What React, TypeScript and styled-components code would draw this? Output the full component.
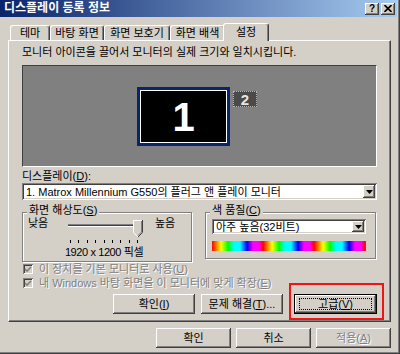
import React from "react";
import styled, { createGlobalStyle, css } from "styled-components";

const GlobalStyle = createGlobalStyle`
  html, body {
    margin: 0;
    padding: 0;
    background: #d4d0c8;
  }
  body {
    font-family: "Liberation Sans", "Noto Sans CJK KR", sans-serif;
    font-size: 11px;
    color: #000;
  }
  * {
    box-sizing: border-box;
  }
`;

const raised = css`
  box-shadow: inset -1px -1px #404040, inset 1px 1px #fff, inset -2px -2px #808080,
    inset 2px 2px #d4d0c8;
`;

const sunken = css`
  box-shadow: inset 1px 1px #808080, inset -1px -1px #fff, inset 2px 2px #404040,
    inset -2px -2px #d4d0c8;
`;

const Window = styled.div`
  width: 400px;
  height: 354px;
  background: #d4d0c8;
  display: flex;
  flex-direction: column;
  box-shadow: inset -1px -1px #404040, inset -2px -2px #808080;
  overflow: hidden;
`;

const TitleBar = styled.div`
  height: 17px;
  margin-right: 3px;
  padding: 0 2px 0 4px;
  background: linear-gradient(to right, #0a246a, #a6caf0);
  display: flex;
  align-items: center;
  justify-content: space-between;
`;

const Title = styled.span`
  color: #fff;
  font-weight: bold;
  font-size: 12px;
  line-height: 17px;
  white-space: nowrap;
`;

const CaptionButtons = styled.div`
  display: flex;
  gap: 2px;
`;

const CaptionButton = styled.div`
  width: 14px;
  height: 12px;
  background: #d4d0c8;
  ${raised}
  display: flex;
  align-items: center;
  justify-content: center;
  font-family: "Liberation Sans", sans-serif;
  font-weight: bold;
  font-size: 10px;
  line-height: 10px;
`;

const Body = styled.div`
  flex: 1;
  display: flex;
  flex-direction: column;
  padding: 6px 9px 0 8px;
`;

const TabStrip = styled.div`
  display: flex;
  align-items: flex-end;
  height: 17px;
  padding-left: 2px;
  position: relative;
  z-index: 1;
`;

const Tab = styled.div<{ $w: number; $active?: boolean }>`
  width: ${(p) => p.$w}px;
  height: 15px;
  background: #d4d0c8;
  border: 1px solid;
  border-color: #fff #404040 transparent #fff;
  border-bottom: 0;
  border-radius: 3px 3px 0 0;
  box-shadow: inset -1px 0 #808080;
  display: flex;
  align-items: center;
  justify-content: center;
  line-height: 12px;
  white-space: nowrap;
  ${(p) =>
    p.$active &&
    css`
      width: ${p.$w + 4}px;
      height: 18px;
      margin: 0 -2px -1px -2px;
      position: relative;
      z-index: 2;
      padding-bottom: 2px;
    `}
`;

const Panel = styled.div`
  height: 282px;
  border: 1px solid;
  border-color: #fff #404040 #404040 #fff;
  box-shadow: inset -1px -1px #808080;
  padding: 5px 13px 0 13px;
  display: flex;
  flex-direction: column;
`;

const Line = styled.div<{ $mt?: number }>`
  line-height: 12px;
  white-space: nowrap;
  margin-top: ${(p) => p.$mt ?? 0}px;
`;

const MonitorCanvas = styled.div`
  position: relative;
  height: 102px;
  margin-top: 7px;
  background: #808080;
  border: 1px solid;
  border-color: #404040 #fff #fff #404040;
`;

const Monitor = styled.div<{ $x: number; $y: number; $w: number; $h: number }>`
  position: absolute;
  left: ${(p) => p.$x}px;
  top: ${(p) => p.$y}px;
  width: ${(p) => p.$w}px;
  height: ${(p) => p.$h}px;
  display: flex;
  align-items: center;
  justify-content: center;
  font-family: "Liberation Sans", sans-serif;
  font-weight: bold;
`;

const PrimaryMonitor = styled(Monitor)`
  background: #000;
  border: 3px solid #0a246a;
  box-shadow: inset 0 0 0 1px #fff;
  color: #fff;
  font-size: 40px;
  line-height: 1;
`;

const SecondaryMonitor = styled(Monitor)`
  background: #4a4a4a;
  border: 1px dotted #b8b8b8;
  color: #e6e6e6;
  font-size: 15px;
  line-height: 1;
`;

const Combo = styled.div<{ $h: number; $mt?: number }>`
  height: ${(p) => p.$h}px;
  margin-top: ${(p) => p.$mt ?? 0}px;
  background: #fff;
  ${sunken}
  display: flex;
  align-items: stretch;
  padding: 2px 2px 2px 4px;
`;

const ComboText = styled.span`
  flex: 1;
  align-self: center;
  line-height: 12px;
  white-space: nowrap;
  overflow: hidden;
`;

const ComboArrow = styled.div`
  width: 12px;
  background: #d4d0c8;
  ${raised}
  display: flex;
  align-items: center;
  justify-content: center;
`;

const GroupRow = styled.div`
  display: flex;
  align-items: flex-start;
  gap: 13px;
  margin-top: 12px;
`;

const GroupBox = styled.div<{ $w: number; $h: number }>`
  position: relative;
  width: ${(p) => p.$w}px;
  height: ${(p) => p.$h}px;
  border: 1px solid #808080;
  box-shadow: inset 1px 1px #fff, 1px 1px #fff;
`;

const GroupLabel = styled.span`
  position: absolute;
  top: -9px;
  left: 4px;
  padding: 0 2px;
  background: #d4d0c8;
  line-height: 12px;
  white-space: nowrap;
`;

const ResolutionBody = styled.div`
  display: flex;
  align-items: flex-start;
  padding: 4px 0 0 5px;
`;

const SideLabel = styled.span`
  width: 22px;
  line-height: 12px;
  white-space: nowrap;
`;

const SliderColumn = styled.div`
  width: 80px;
  margin: 3px 11px 0 14px;
  display: flex;
  flex-direction: column;
  align-items: center;
`;

const Slider = styled.div`
  position: relative;
  width: 80px;
  height: 23px;
  display: flex;
  flex-direction: column;
`;

const Track = styled.div`
  height: 3px;
  margin: 4px 6px 0 4px;
  border-top: 1px solid #808080;
  border-bottom: 1px solid #fff;
  background: #404040;
`;

const Ticks = styled.div`
  display: flex;
  justify-content: space-between;
  margin: 13px 6px 0 6px;
`;

const Tick = styled.span`
  width: 1px;
  height: 3px;
  background: #000;
`;

const Thumb = styled.svg`
  position: absolute;
  left: 69px;
  top: 0;
`;

const Caption = styled.span`
  margin-top: 3px;
  line-height: 12px;
  letter-spacing: -0.4px;
  white-space: nowrap;
`;

const ColorBody = styled.div`
  display: flex;
  flex-direction: column;
  padding: 6px 9px 0 6px;
`;

const ColorBar = styled.div`
  height: 10px;
  margin-top: 7px;
  background: repeating-linear-gradient(
    to right,
    #ff0000 0px,
    #ffff00 9px,
    #00ff00 16px,
    #00ffff 22px,
    #00ffff 28px,
    #0000ff 35px,
    #ff00ff 41px,
    #ff00ff 47px,
    #ff0000 51px
  );
`;

const CheckRow = styled.div`
  height: 14px;
  display: flex;
  align-items: center;
  gap: 6px;
  padding-left: 1px;
  color: #808080;
  text-shadow: 1px 1px #fff;
  line-height: 12px;
  white-space: nowrap;
`;

const CheckBox = styled.span`
  width: 10px;
  height: 10px;
  flex: none;
  background: #d4d0c8;
  ${sunken}
  display: flex;
  align-items: center;
  justify-content: center;
`;

const ActionRow = styled.div`
  display: flex;
  justify-content: flex-end;
  gap: 6px;
  margin-top: 4px;
`;

const Button = styled.div<{ $w: number; $focused?: boolean; $disabled?: boolean }>`
  position: relative;
  width: ${(p) => p.$w}px;
  height: 20px;
  background: #d4d0c8;
  ${raised}
  display: flex;
  align-items: center;
  justify-content: center;
  line-height: 12px;
  white-space: nowrap;
  ${(p) =>
    p.$disabled &&
    css`
      color: #808080;
      text-shadow: 1px 1px #fff;
    `}
  ${(p) =>
    p.$focused &&
    css`
      box-shadow: inset 0 0 0 1px #000, inset -2px -2px #404040, inset 2px 2px #fff,
        inset -3px -3px #808080;
      &::after {
        content: "";
        position: absolute;
        inset: 4px 5px;
        border: 1px dotted #000;
      }
    `}
`;

const Highlighted = styled.div`
  position: relative;
  margin-left: 5px;
`;

const RedMark = styled.span`
  position: absolute;
  top: -11px;
  left: -5px;
  right: -7px;
  bottom: -6px;
  border: 2px solid #f01414;
  pointer-events: none;
`;

const BottomBar = styled.div`
  display: flex;
  justify-content: flex-end;
  gap: 5px;
  margin-top: 6px;
`;

const DownArrow = () => (
  <svg width="7" height="4" viewBox="0 0 7 4">
    <path d="M0 0 H7 L3.5 4 Z" fill="#000" />
  </svg>
);

const Check = () => (
  <svg width="8" height="7" viewBox="0 0 8 7">
    <path d="M1 3 L3 5 L7 1" stroke="#808080" strokeWidth="1.6" fill="none" />
  </svg>
);

const tabs = [
  { label: "테마", w: 40 },
  { label: "바탕 화면", w: 54 },
  { label: "화면 보호기", w: 66 },
  { label: "화면 배색", w: 55 },
  { label: "설정", w: 42, active: true },
];

export default function App() {
  return (
    <>
      <GlobalStyle />
      <Window>
        <TitleBar>
          <Title>디스플레이 등록 정보</Title>
          <CaptionButtons>
            <CaptionButton>?</CaptionButton>
            <CaptionButton>
              <svg width="8" height="7" viewBox="0 0 8 7">
                <path d="M0.5 0 L7.5 7 M7.5 0 L0.5 7" stroke="#000" strokeWidth="1.6" />
              </svg>
            </CaptionButton>
          </CaptionButtons>
        </TitleBar>

        <Body>
          <TabStrip>
            {tabs.map((t) => (
              <Tab key={t.label} $w={t.w} $active={t.active}>
                {t.label}
              </Tab>
            ))}
          </TabStrip>

          <Panel>
            <Line>모니터 아이콘을 끌어서 모니터의 실제 크기와 일치시킵니다.</Line>

            <MonitorCanvas>
              <PrimaryMonitor $x={114} $y={21} $w={93} $h={59}>
                1
              </PrimaryMonitor>
              <SecondaryMonitor $x={210} $y={25} $w={24} $h={16}>
                2
              </SecondaryMonitor>
            </MonitorCanvas>

            <Line $mt={3}>
              디스플레이(<u>D</u>):
            </Line>
            <Combo $h={17} $mt={1}>
              <ComboText>1. Matrox Millennium G550의 플러그 앤 플레이 모니터</ComboText>
              <ComboArrow>
                <DownArrow />
              </ComboArrow>
            </Combo>

            <GroupRow>
              <GroupBox $w={170} $h={50}>
                <GroupLabel>
                  화면 해상도(<u>S</u>)
                </GroupLabel>
                <ResolutionBody>
                  <SideLabel>낮음</SideLabel>
                  <SliderColumn>
                    <Slider>
                      <Track />
                      <Ticks>
                        {Array.from({ length: 9 }).map((_, i) => (
                          <Tick key={i} />
                        ))}
                      </Ticks>
                      <Thumb width="10" height="18" viewBox="0 0 10 18">
                        <path d="M0.5 0.5 H9.5 V12.5 L5 17 L0.5 12.5 Z" fill="#d4d0c8" />
                        <path d="M0.5 12.5 V0.5 H9 M0.5 12.5 L5 17" stroke="#fff" fill="none" />
                        <path d="M9.5 0 V12.5 L5 17" stroke="#404040" fill="none" />
                        <path d="M8.5 1 V12 L5 15.5" stroke="#808080" fill="none" />
                      </Thumb>
                    </Slider>
                    <Caption>1920 x 1200 픽셀</Caption>
                  </SliderColumn>
                  <SideLabel>높음</SideLabel>
                </ResolutionBody>
              </GroupBox>

              <GroupBox $w={171} $h={47}>
                <GroupLabel>
                  색 품질(<u>C</u>)
                </GroupLabel>
                <ColorBody>
                  <Combo $h={15}>
                    <ComboText>아주 높음(32비트)</ComboText>
                    <ComboArrow>
                      <DownArrow />
                    </ComboArrow>
                  </Combo>
                  <ColorBar />
                </ColorBody>
              </GroupBox>
            </GroupRow>

            <CheckRow>
              <CheckBox>
                <Check />
              </CheckBox>
              <span>
                이 장치를 기본 모니터로 사용(<u>U</u>)
              </span>
            </CheckRow>
            <CheckRow>
              <CheckBox>
                <Check />
              </CheckBox>
              <span>
                내 Windows 바탕 화면을 이 모니터에 맞게 확장(<u>E</u>)
              </span>
            </CheckRow>

            <ActionRow>
              <Button $w={82}>
                <span>
                  확인(<u>I</u>)
                </span>
              </Button>
              <Button $w={82}>
                <span>
                  문제 해결(<u>T</u>)...
                </span>
              </Button>
              <Highlighted>
                <Button $w={83} $focused>
                  <span>
                    고급(<u>V</u>)
                  </span>
                </Button>
                <RedMark />
              </Highlighted>
            </ActionRow>
          </Panel>

          <BottomBar>
            <Button $w={75}>확인</Button>
            <Button $w={75}>취소</Button>
            <Button $w={75} $disabled>
              <span>
                적용(<u>A</u>)
              </span>
            </Button>
          </BottomBar>
        </Body>
      </Window>
    </>
  );
}
